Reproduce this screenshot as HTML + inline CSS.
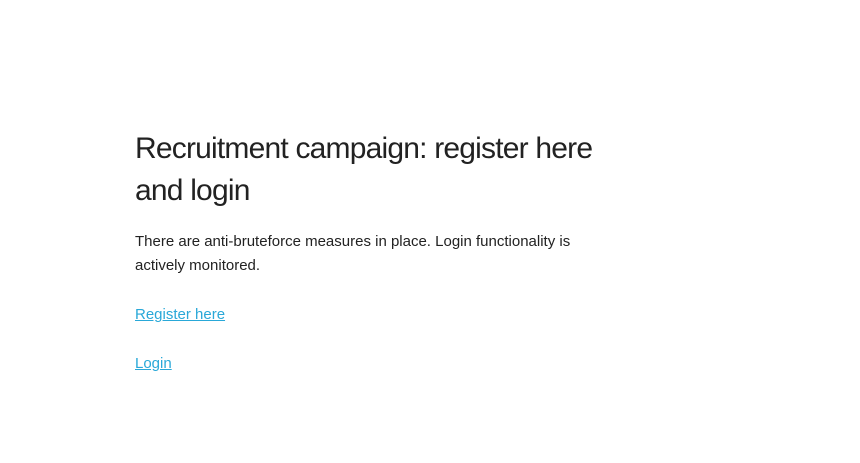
<!DOCTYPE html>
<html><head><style>
body{margin:0;background:#fff;font-family:"Liberation Sans",sans-serif;color:#222;}
.w{position:absolute;left:135px;top:128px;width:480px;}
h1{font-weight:normal;font-size:30px;line-height:42px;margin:0;letter-spacing:-0.8px;}
p{font-size:15px;line-height:24px;margin:0;}
a{color:#29a8d8;font-size:15px;line-height:24px;}
</style></head><body>
<div class="w">
<h1>Recruitment campaign: register here and login</h1>
<p style="margin-top:18px;width:470px">There are anti-bruteforce measures in place. Login functionality is actively monitored.</p>
<p style="margin-top:25px"><a href="#">Register here</a></p>
<p style="margin-top:25px"><a href="#">Login</a></p>
</div>
</body></html>
